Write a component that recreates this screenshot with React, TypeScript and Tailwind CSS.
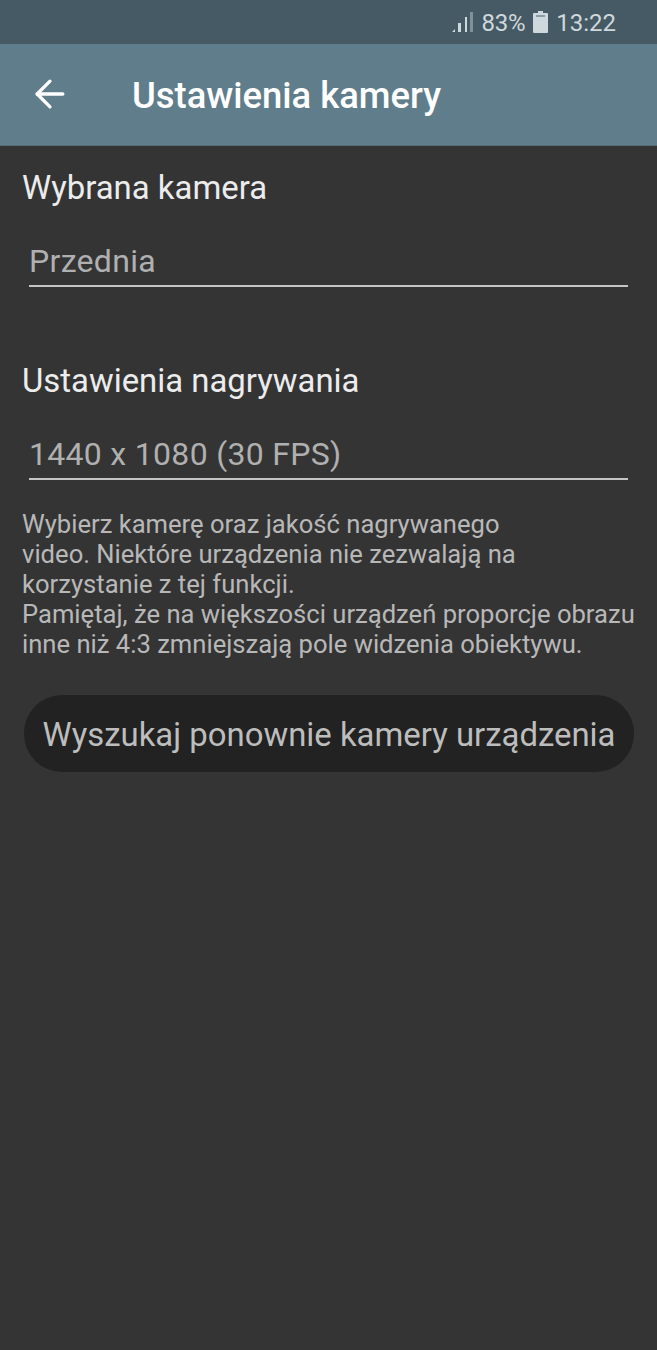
import { ArrowLeft } from "lucide-react";

function Field({ label, value }: { label: string; value: string }) {
  return (
    <div>
      <div className="text-[32.9px] leading-[38px] text-[#ececec]">{label}</div>
      <div className="mt-[30px] mx-[7px] h-[50px] border-b-2 border-[#c4c4c4] pt-[5px] text-[32px] leading-[38px] tracking-[0.3px] text-[#b0b0b0]">
        {value}
      </div>
    </div>
  );
}

export default function App() {
  return (
    <div className="flex h-[1350px] w-[657px] flex-col overflow-hidden bg-[#343434] font-['Roboto',sans-serif]">
      <div className="flex h-[44px] items-center justify-end bg-[#455a64] pr-[41px] text-[#cfd8dc]">
        <svg width="21" height="24" viewBox="0 0 21 24" className="mr-[9px]">
          <path d="M0 22l3-3v3z" fill="#cfd8dc" />
          <rect x="6" y="13" width="3" height="9" fill="#cfd8dc" />
          <rect x="13" y="7" width="2" height="15" fill="#cfd8dc" />
          <rect x="18" y="2" width="3" height="20" fill="#7f929b" />
        </svg>
        <span className="pt-[1px] text-[24px] leading-[30px] tracking-[-0.3px]">83%</span>
        <svg width="15" height="22" viewBox="0 0 15 22" className="ml-[8px] mr-[8px]">
          <path d="M5 0h5v2h4a1 1 0 0 1 1 1v18a1 1 0 0 1-1 1H1a1 1 0 0 1-1-1V3a1 1 0 0 1 1-1h4z" fill="#cfd8dc" />
          <rect x="3" y="4" width="9" height="2" fill="#8a9ca5" />
        </svg>
        <span className="pt-[1px] text-[24px] leading-[30px]">13:22</span>
      </div>
      <header className="flex h-[102px] items-center border-b border-[#566a74] bg-[#607d8b] pl-[28px]">
        <ArrowLeft size={44} strokeWidth={1.8} className="-mt-[2px] text-white" />
        <h1 className="ml-[60px] mt-[3px] text-[36.4px] leading-[42px] font-medium text-white">Ustawienia kamery</h1>
      </header>
      <main className="flex-1 px-[22px] pt-[23px]">
        <Field label="Wybrana kamera" value="Przednia" />
        <div className="mt-[75px]">
          <Field label="Ustawienia nagrywania" value="1440 x 1080 (30 FPS)" />
        </div>
        <p className="mt-[29px] text-[25.6px] leading-[30px] whitespace-nowrap text-[#b8b8b8]">
          Wybierz kamerę oraz jakość nagrywanego
          <br />
          video. Niektóre urządzenia nie zezwalają na
          <br />
          korzystanie z tej funkcji.
          <br />
          Pamiętaj, że na większości urządzeń proporcje obrazu
          <br />
          inne niż 4:3 zmniejszają pole widzenia obiektywu.
        </p>
        <button className="mt-[36px] ml-[2px] flex h-[77px] w-[610px] items-center justify-center rounded-[38px] bg-[#222222] pt-[3px] text-[32.9px] whitespace-nowrap text-[#bdbdbd]">
          Wyszukaj ponownie kamery urządzenia
        </button>
      </main>
    </div>
  );
}
